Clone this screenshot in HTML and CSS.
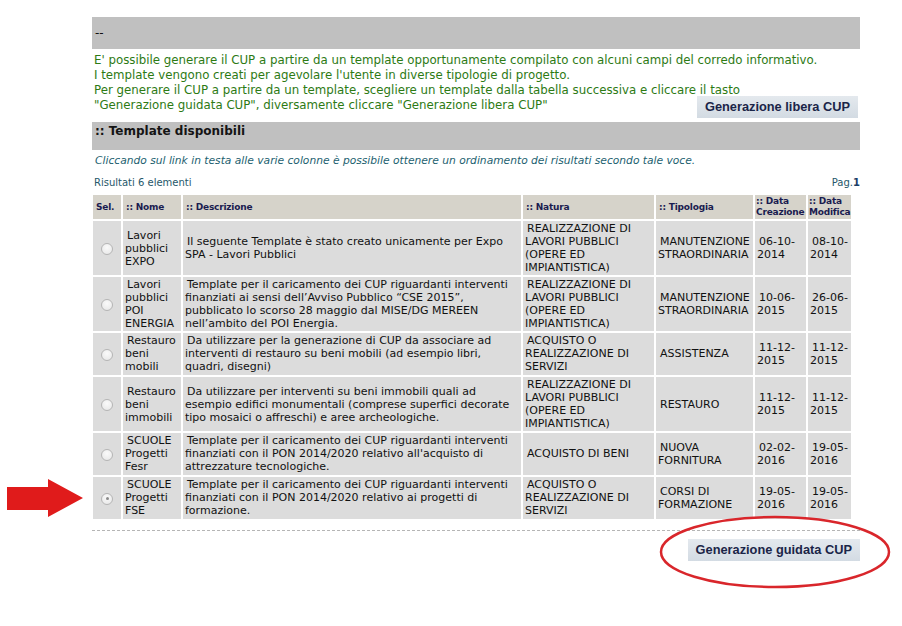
FILE: index.html
```html
<!DOCTYPE html>
<html lang="it">
<head>
<meta charset="utf-8">
<title>Template CUP</title>
<link rel="stylesheet" href="styles.css">
</head>
<body>
<div class="page">
  <div class="bar bar-top">--</div>
  <div class="intro">
    <p>E' possibile generare il CUP a partire da un template opportunamente compilato con alcuni campi del corredo informativo.</p>
    <p>I template vengono creati per agevolare l'utente in diverse tipologie di progetto.</p>
    <p>Per generare il CUP a partire da un template, scegliere un template dalla tabella successiva e cliccare il tasto</p>
    <div class="intro-last">
      <p>"Generazione guidata CUP", diversamente cliccare "Generazione libera CUP"</p>
      <button class="btn">Generazione libera CUP</button>
    </div>
  </div>
  <div class="bar bar-section">:: Template disponibili</div>
  <p class="hint">Cliccando sul link in testa alle varie colonne è possibile ottenere un ordinamento dei risultati secondo tale voce.</p>
  <div class="results">
    <span>Risultati 6 elementi</span>
    <span>Pag.<b>1</b></span>
  </div>
  <table class="grid">
    <colgroup>
      <col class="c-sel">
      <col class="c-nome">
      <col class="c-desc">
      <col class="c-nat">
      <col class="c-tip">
      <col class="c-dc">
      <col class="c-dm">
    </colgroup>
    <thead>
      <tr>
        <th>Sel.</th>
        <th>:: Nome</th>
        <th>:: Descrizione</th>
        <th>:: Natura</th>
        <th>:: Tipologia</th>
        <th>:: Data Creazione</th>
        <th>:: Data Modifica</th>
      </tr>
    </thead>
    <tbody>
      <tr>
        <td class="sel"><span class="radio"></span></td>
        <td>Lavori pubblici EXPO</td>
        <td>Il seguente Template è stato creato unicamente per Expo SPA - Lavori Pubblici</td>
        <td>REALIZZAZIONE DI LAVORI PUBBLICI (OPERE ED IMPIANTISTICA)</td>
        <td>MANUTENZIONE STRAORDINARIA</td>
        <td>06-10-2014</td>
        <td>08-10-2014</td>
      </tr>
      <tr>
        <td class="sel"><span class="radio"></span></td>
        <td>Lavori pubblici POI ENERGIA</td>
        <td>Template per il caricamento dei CUP riguardanti interventi finanziati ai sensi dell’Avviso Pubblico “CSE 2015”, pubblicato lo scorso 28 maggio dal MISE/DG MEREEN nell’ambito del POI Energia.</td>
        <td>REALIZZAZIONE DI LAVORI PUBBLICI (OPERE ED IMPIANTISTICA)</td>
        <td>MANUTENZIONE STRAORDINARIA</td>
        <td>10-06-2015</td>
        <td>26-06-2015</td>
      </tr>
      <tr class="r3">
        <td class="sel"><span class="radio"></span></td>
        <td>Restauro beni mobili</td>
        <td>Da utilizzare per la generazione di CUP da associare ad interventi di restauro su beni mobili (ad esempio libri, quadri, disegni)</td>
        <td>ACQUISTO O REALIZZAZIONE DI SERVIZI</td>
        <td>ASSISTENZA</td>
        <td>11-12-2015</td>
        <td>11-12-2015</td>
      </tr>
      <tr>
        <td class="sel"><span class="radio"></span></td>
        <td>Restauro beni immobili</td>
        <td>Da utilizzare per interventi su beni immobili quali ad esempio edifici monumentali (comprese superfici decorate tipo mosaici o affreschi) e aree archeologiche.</td>
        <td>REALIZZAZIONE DI LAVORI PUBBLICI (OPERE ED IMPIANTISTICA)</td>
        <td>RESTAURO</td>
        <td>11-12-2015</td>
        <td>11-12-2015</td>
      </tr>
      <tr class="r3">
        <td class="sel"><span class="radio"></span></td>
        <td>SCUOLE Progetti Fesr</td>
        <td>Template per il caricamento dei CUP riguardanti interventi finanziati con il PON 2014/2020 relativo all'acquisto di attrezzature tecnologiche.</td>
        <td>ACQUISTO DI BENI</td>
        <td>NUOVA FORNITURA</td>
        <td>02-02-2016</td>
        <td>19-05-2016</td>
      </tr>
      <tr class="r3">
        <td class="sel"><span class="radio checked"></span></td>
        <td>SCUOLE Progetti FSE</td>
        <td>Template per il caricamento dei CUP riguardanti interventi finanziati con il PON 2014/2020 relativo ai progetti di formazione.</td>
        <td>ACQUISTO O REALIZZAZIONE DI SERVIZI</td>
        <td>CORSI DI FORMAZIONE</td>
        <td>19-05-2016</td>
        <td>19-05-2016</td>
      </tr>
    </tbody>
  </table>
  <div class="footer">
    <button class="btn">Generazione guidata CUP</button>
  </div>
</div>
<svg class="arrow" width="78" height="42" viewBox="0 0 78 42">
  <polygon points="0,8 41,8 41,0 76,19 41,38 41,31 0,31" fill="#e01b1b"/>
</svg>
<svg class="ellipse" width="236" height="80" viewBox="0 0 236 80">
  <ellipse cx="118" cy="39" rx="114" ry="35" fill="none" stroke="#d9262b" stroke-width="2.5"/>
</svg>
</body>
</html>
```
FILE: styles.css
```css
html, body {
  margin: 0;
  padding: 0;
  background: #ffffff;
}
body {
  font-family: "DejaVu Sans", Verdana, sans-serif;
  position: relative;
  width: 902px;
  height: 626px;
}
.page {
  margin-left: 92px;
  padding-top: 17px;
  width: 768px;
}
.bar {
  background: #c0c0c0;
  color: #111;
  padding-left: 3px;
}
.bar-top {
  height: 32px;
  line-height: 33px;
  font-size: 12px;
}
.intro {
  color: #2d7a14;
  font-size: 11.8px;
  line-height: 15px;
  padding: 4px 0 0 2px;
}
.intro p {
  margin: 0;
  white-space: nowrap;
}
.intro-last {
  display: flex;
  justify-content: space-between;
  align-items: flex-start;
}
.intro-last .btn {
  margin-top: -2px;
  margin-right: 2px;
}
.btn {
  font-family: "Liberation Sans", Arial, sans-serif;
  font-weight: bold;
  font-size: 12.8px;
  color: #1b2548;
  background: linear-gradient(#e4e9ee, #d3dbe3);
  border: none;
  padding: 0 8px;
  height: 22px;
  line-height: 22px;
  cursor: pointer;
}
.bar-section {
  margin-top: 4px;
  height: 28px;
  line-height: 19px;
  font-weight: bold;
  font-size: 12px;
  color: #141414;
}
.hint {
  margin: 4px 0 0 3px;
  font-size: 10.7px;
  font-style: italic;
  color: #1d5f70;
  line-height: 14px;
}
.results {
  display: flex;
  justify-content: space-between;
  font-size: 10px;
  color: #26586a;
  margin: 9px 0 0 2px;
  line-height: 12px;
}
.results b {
  color: #1a3e66;
}
.grid {
  margin-top: 4px;
  margin-left: -1px;
  border-collapse: separate;
  border-spacing: 2px;
  table-layout: fixed;
  width: 762px;
  font-size: 11px;
  color: #111;
}
.c-sel { width: 28px; }
.c-nome { width: 58px; }
.c-desc { width: 338px; }
.c-nat { width: 131px; }
.c-tip { width: 97px; }
.c-dc { width: 51px; }
.c-dm { width: 43px; }
.grid th {
  background: #d6d3ca;
  color: #1a1c50;
  font-size: 9px;
  letter-spacing: -0.2px;
  font-weight: bold;
  text-align: left;
  padding: 0 1px 0 3px;
  height: 24px;
  line-height: 11px;
  vertical-align: middle;
}
.grid th:nth-child(n+6) {
  padding-left: 1px;
  padding-right: 0;
}
.grid td {
  background: #dcdcdc;
  padding: 1px 2px;
  line-height: 13px;
  text-indent: 2px;
  vertical-align: middle;
}
.grid tr.r3 td {
  padding-bottom: 2px;
}
.grid td.sel {
  text-align: center;
  text-indent: 0;
  padding-top: 6px;
}
.radio {
  display: inline-block;
  width: 12px;
  height: 12px;
  border-radius: 50%;
  border: 1px solid #b5b5b5;
  background: radial-gradient(circle at 50% 35%, #fafafa, #e6e6e6);
  box-sizing: border-box;
  position: relative;
}
.radio.checked::after {
  content: "";
  position: absolute;
  left: 3.5px;
  top: 3.5px;
  width: 3px;
  height: 3px;
  border-radius: 50%;
  background: #8a8a8a;
}
.footer {
  margin-top: 9px;
  border-top: 1px dashed #b5b5b5;
  display: flex;
  justify-content: flex-end;
  padding-top: 8px;
}
.arrow {
  position: absolute;
  left: 7px;
  top: 479px;
}
.ellipse {
  position: absolute;
  left: 657px;
  top: 513px;
}
```
